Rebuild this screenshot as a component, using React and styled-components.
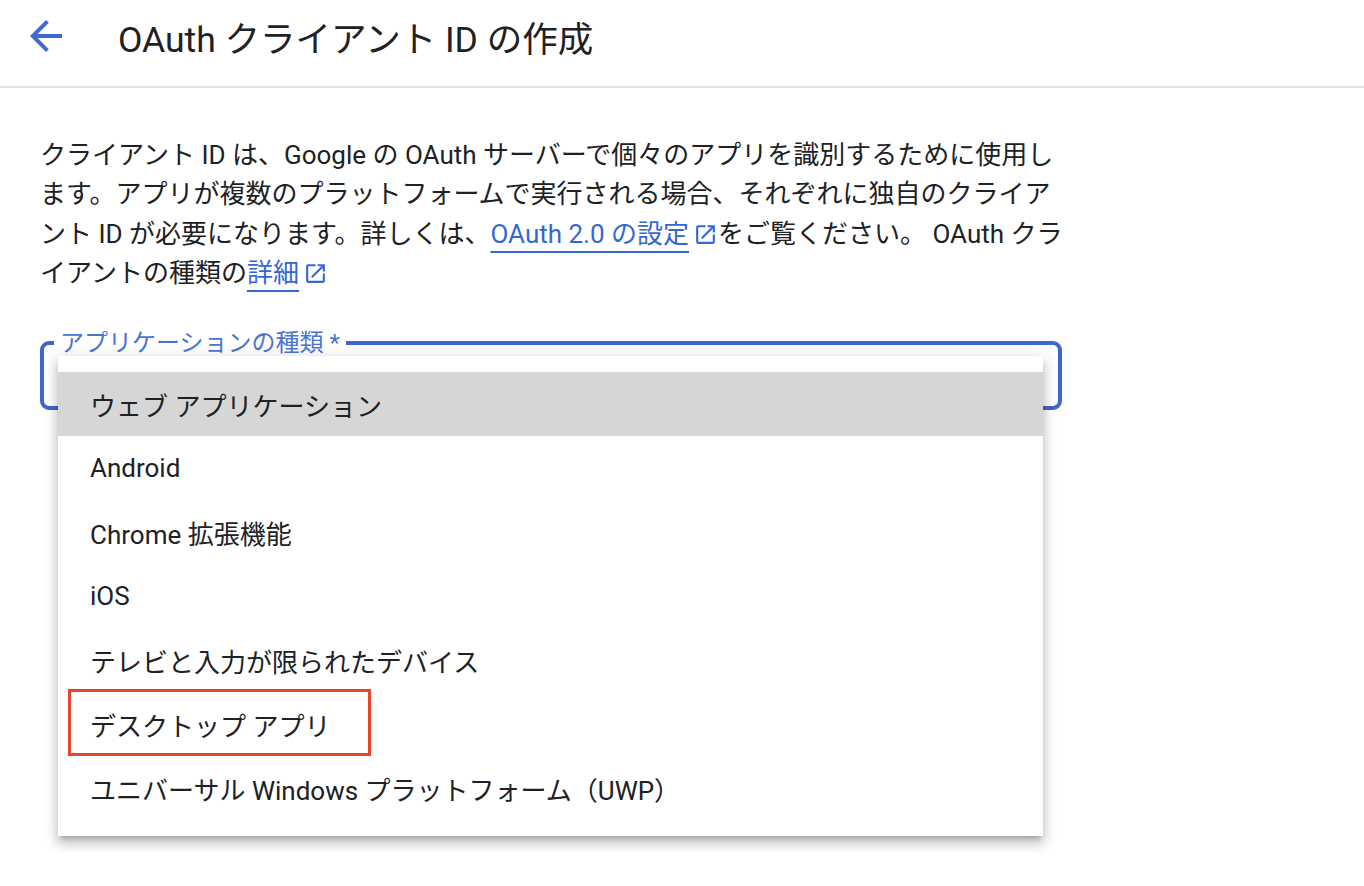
import React from "react";
import styled, { createGlobalStyle } from "styled-components";

const GlobalStyle = createGlobalStyle`
  html, body {
    margin: 0;
    padding: 0;
    background: #fff;
  }
  body {
    font-family: Roboto, "Noto Sans CJK JP", "Noto Sans", sans-serif;
    color: #202124;
  }
  #root {
    min-height: 100vh;
  }
`;

const Page = styled.div`
  min-height: 886px;
`;

const Head = styled.header`
  height: 88px;
  display: flex;
  align-items: center;
  padding-bottom: 14px;
  border-bottom: 2px solid #e3e3e3;
  box-sizing: border-box;
`;

const BackBtn = styled.button`
  width: 48px;
  height: 48px;
  margin-left: 22px;
  margin-right: 48px;
  padding: 0;
  border: none;
  background: none;
  display: flex;
  align-items: center;
  justify-content: center;
  cursor: pointer;
`;

const Title = styled.h1`
  margin: 0;
  font-size: 35.5px;
  font-weight: 400;
  color: #202124;
`;

const Body = styled.main`
  padding: 48px 40px 0;
`;

const Description = styled.p`
  margin: 0;
  width: 1024px;
  font-size: 26px;
  line-height: 39.3px;
  color: #202124;
`;

const Link = styled.a`
  color: #3367d6;
  text-decoration: underline;
  text-decoration-thickness: 2px;
  text-underline-offset: 8px;
  cursor: pointer;
`;

const LinkIcon = styled.svg`
  width: 25px;
  height: 25px;
  fill: #3367d6;
  vertical-align: -4px;
  margin-left: 4px;
`;

const Field = styled.div`
  position: relative;
  margin-top: 48px;
  width: 1022px;
  height: 69px;
  border: 4px solid #3d68cb;
  border-radius: 9px;
  box-sizing: border-box;
`;

const FieldLabel = styled.span`
  position: absolute;
  top: -17px;
  left: 10px;
  padding: 0 6px;
  background: #fff;
  font-size: 24px;
  line-height: 30px;
  color: #4a74d4;
`;

const Menu = styled.ul`
  position: absolute;
  top: 11px;
  left: 14px;
  width: 985px;
  margin: 0;
  padding: 16px 0;
  list-style: none;
  background: #fff;
  box-shadow: 0 5px 5px -3px rgba(0, 0, 0, 0.2),
    0 8px 10px 1px rgba(0, 0, 0, 0.14), 0 3px 14px 2px rgba(0, 0, 0, 0.12);
`;

const Option = styled.li`
  position: relative;
  height: 64px;
  display: flex;
  align-items: center;
  padding-left: 32px;
  font-size: 26px;
  color: #202124;
  background: ${(p) => (p.$active ? "#d6d6d6" : "transparent")};
`;

const Callout = styled.span`
  position: absolute;
  left: 10px;
  top: -3px;
  width: 303px;
  height: 67px;
  border: 3px solid #e8452c;
  box-sizing: border-box;
  pointer-events: none;
`;

const options = [
  "ウェブ アプリケーション",
  "Android",
  "Chrome 拡張機能",
  "iOS",
  "テレビと入力が限られたデバイス",
  "デスクトップ アプリ",
  "ユニバーサル Windows プラットフォーム（UWP）",
];

function OpenIcon() {
  return (
    <LinkIcon viewBox="0 0 24 24">
      <path d="M19 19H5V5h7V3H5c-1.11 0-2 .9-2 2v14c0 1.1.89 2 2 2h14c1.1 0 2-.9 2-2v-7h-2v7zM14 3v2h3.59l-9.83 9.83 1.41 1.41L19 6.41V10h2V3h-7z" />
    </LinkIcon>
  );
}

export default function App() {
  return (
    <Page>
      <GlobalStyle />
      <Head>
        <BackBtn aria-label="戻る">
          <svg width="48" height="48" viewBox="0 0 24 24" fill="#3d6bd3">
            <path d="M20 11H7.83l5.59-5.59L12 4l-8 8 8 8 1.41-1.41L7.83 13H20v-2z" />
          </svg>
        </BackBtn>
        <Title>OAuth クライアント ID の作成</Title>
      </Head>
      <Body>
        <Description>
          クライアント ID は、Google の OAuth
          サーバーで個々のアプリを識別するために使用します。アプリが複数のプラットフォームで実行される場合、それぞれに独自のクライアント
          ID が必要になります。詳しくは、
          <Link>OAuth 2.0 の設定</Link>
          <OpenIcon />
          をご覧ください。 OAuth クライアントの種類の<Link>詳細</Link>
          <OpenIcon />
        </Description>
        <Field>
          <FieldLabel>アプリケーションの種類 *</FieldLabel>
          <Menu>
            {options.map((o, i) => (
              <Option key={o} $active={i === 0}>
                {o}
                {i === 5 && <Callout />}
              </Option>
            ))}
          </Menu>
        </Field>
      </Body>
    </Page>
  );
}
